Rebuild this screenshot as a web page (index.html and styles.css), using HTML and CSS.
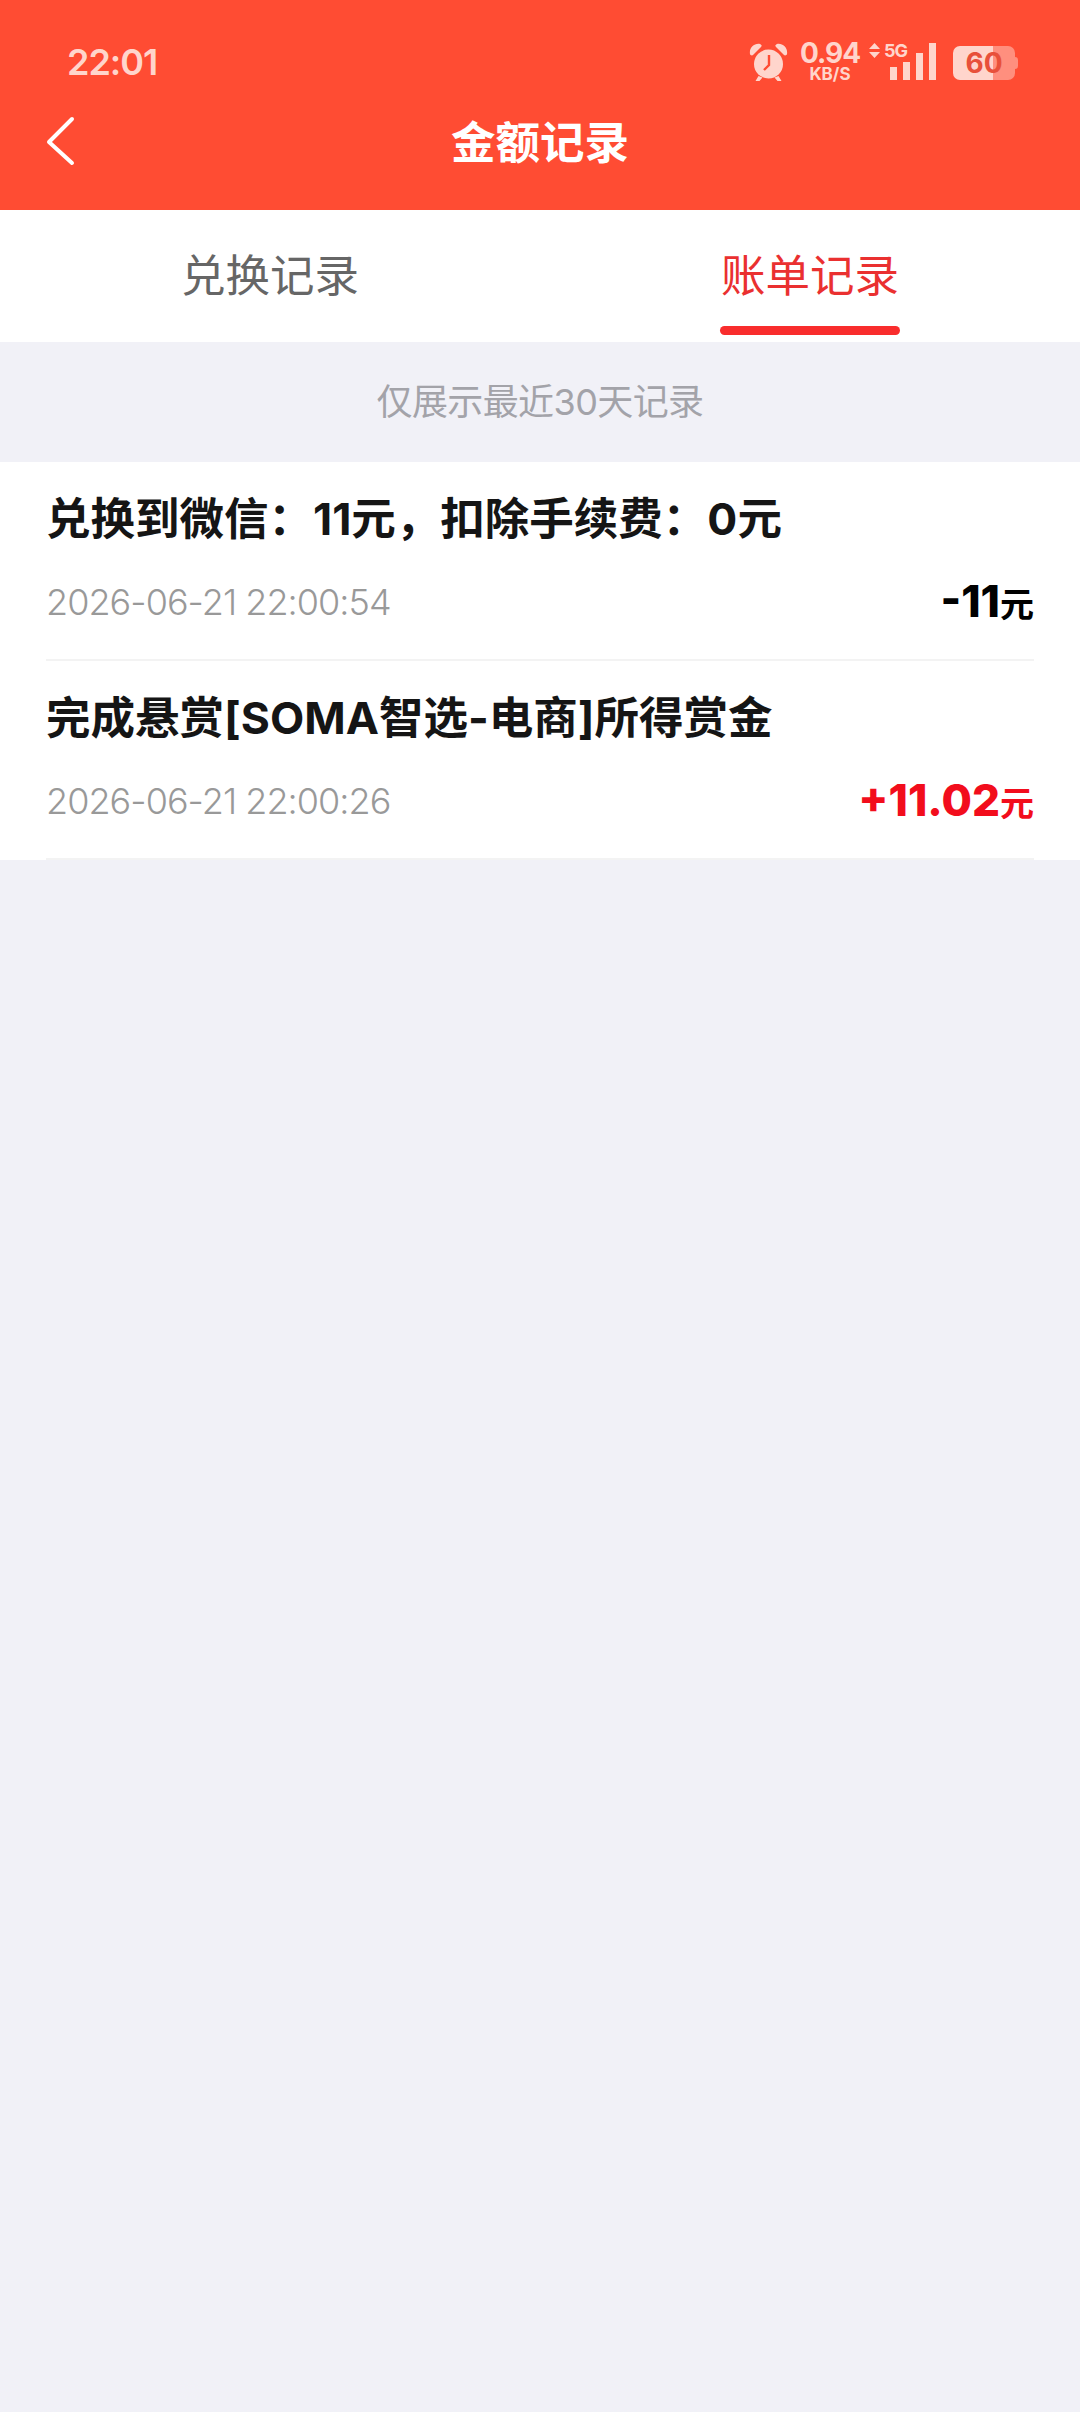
FILE: index.html
```html
<!DOCTYPE html>
<html>
<head>
    <title>金额记录</title>
    <link rel="stylesheet" href="styles.css">
</head>
<body>
<div class="header">
    <div class="status-bar">
        <span class="time">22:01</span>
        <div class="status-icons">
            <svg class="alarm" width="40" height="40" viewBox="0 0 40 40">
                <path d="M9.5 34l-3 5h4l3-3.500zM29.500 34l3 5h-4l-3-3.500z" fill="#ffd5cc"/>
                <circle cx="19.500" cy="22" r="14.500" fill="#ffd5cc"/>
                <path d="M20 13v10l-5 5" fill="none" stroke="#ff4c33" stroke-width="2.400"/>
                <path d="M1 12C0 6 5 1 11 2c2 1 2 2 1 3L4 13c-1 1-3 0-3-1zM38 12c1-6-4-11-10-10-2 1-2 2-1 3l8 8c1 1 3 0 3-1z" fill="#ffd5cc"/>
            </svg>
            <div class="speed">
                <span class="speed-num">0.94</span>
                <span class="speed-unit">KB/S</span>
            </div>
            <div class="net">
                <svg width="11" height="15" viewBox="0 0 11 15">
                    <path d="M5.500 0l5.500 6H0zM5.500 15L11 9H0z" fill="#ffd5cc"/>
                </svg>
                <span class="net-label">5G</span>
            </div>
            <div class="signal">
                <i class="bar-1"></i>
                <i class="bar-2"></i>
                <i class="bar-3"></i>
                <i class="bar-4"></i>
            </div>
            <div class="battery">
                <span class="battery-level">60</span>
                <i class="battery-cap"></i>
            </div>
        </div>
    </div>
    <div class="nav-bar">
        <svg class="back" width="30" height="50" viewBox="0 0 30 50">
            <path d="M26 3L3 26l23 21" fill="none" stroke="#fff" stroke-width="4" stroke-linecap="round" stroke-linejoin="round"/>
        </svg>
        <span class="nav-title">金额记录</span>
    </div>
</div>

<div class="tabs">
    <div class="tab">兑换记录</div>
    <div class="tab active">账单记录</div>
</div>

<div class="notice">仅展示最近30天记录</div>

<div class="list">
    <div class="item">
        <div class="item-title">兑换到微信：11元，扣除手续费：0元</div>
        <div class="item-info">
            <span class="item-date">2026-06-21 22:00:54</span>
            <span class="item-amount">-11<small>元</small></span>
        </div>
    </div>
    <div class="item">
        <div class="item-title">完成悬赏[SOMA智选-电商]所得赏金</div>
        <div class="item-info">
            <span class="item-date">2026-06-21 22:00:26</span>
            <span class="item-amount income">+11.02<small>元</small></span>
        </div>
    </div>
</div>
</body>
</html>
```

FILE: styles.css
```css
* {
    margin: 0;
    box-sizing: border-box;
}

body {
    min-height: 2412px;
    background: #f1f1f7;
    font-family: Inter, "Noto Sans CJK SC", sans-serif;
}

.header {
    height: 210px;
    background: #ff4c33;
}

.status-bar {
    height: 86px;
    padding: 36px 65px 0 67px;
    display: flex;
    justify-content: space-between;
    align-items: flex-start;
    color: #ffd5cc;
}

.time {
    margin-top: 4px;
    font-size: 36px;
    line-height: 44px;
    font-weight: 600;
    letter-spacing: -1px;
}

.status-icons {
    display: flex;
    align-items: flex-start;
    height: 46px;
}

.alarm {
    margin-top: 6px;
}

.speed {
    width: 60px;
    margin: 3px 0 0 11px;
    display: flex;
    flex-direction: column;
    align-items: center;
    font-weight: 700;
}

.speed-num {
    font-size: 28px;
    line-height: 28px;
    letter-spacing: -1px;
}

.speed-unit {
    font-size: 17px;
    line-height: 14px;
}

.net {
    width: 40px;
    margin-left: 9px;
    display: flex;
    align-items: flex-start;
    gap: 4px;
    padding-top: 7px;
}

.net-label {
    margin-top: -1px;
    font-size: 18px;
    line-height: 18px;
    font-weight: 700;
    letter-spacing: -1px;
}

.signal {
    margin: 7px 0 0 -19px;
    height: 37px;
    display: flex;
    align-items: flex-end;
    gap: 6px;
}

.signal i {
    display: block;
    width: 7px;
    background: #ffd5cc;
}

.bar-1 { height: 13px; }
.bar-2 { height: 18px; }
.bar-3 { height: 27px; }
.bar-4 { height: 37px; }

.battery {
    position: relative;
    width: 62px;
    height: 34px;
    margin: 10px 0 0 17px;
    border-radius: 7px;
    background: linear-gradient(90deg, #ffd5cc 0, #ffd5cc 40px, #ff8f7e 40px);
    color: #e8503a;
    font-size: 28px;
    font-weight: 700;
    line-height: 34px;
    text-align: center;
}

.battery-cap {
    position: absolute;
    right: -3px;
    top: 11px;
    width: 3px;
    height: 12px;
    border-radius: 0 3px 3px 0;
    background: #ff8f7e;
}

.nav-bar {
    position: relative;
    height: 124px;
    display: flex;
    align-items: center;
    justify-content: center;
    padding-bottom: 18px;
}

.back {
    position: absolute;
    left: 46px;
    top: 30px;
}

.nav-title {
    color: #fff;
    font-size: 44.5px;
    font-weight: 700;
}

.tabs {
    height: 132px;
    background: #fff;
    display: flex;
}

.tab {
    flex: 1;
    text-align: center;
    color: #666;
    font-size: 44.5px;
    line-height: 132px;
    position: relative;
}

.tab.active {
    color: #ea3030;
}

.tab.active::after {
    content: "";
    position: absolute;
    left: 180px;
    bottom: 7px;
    width: 180px;
    height: 9px;
    border-radius: 5px;
    background: #f92d2d;
}

.notice {
    height: 120px;
    text-align: center;
    color: #a3a3a9;
    font-size: 36px;
    line-height: 120px;
    letter-spacing: -0.6px;
}

.list {
    background: #fff;
    padding: 0 46px;
}

.item {
    height: 199px;
    border-bottom: 2px solid #f3f3f3;
}

.item-title {
    padding-top: 29px;
    color: #151515;
    font-size: 44.5px;
    line-height: 56px;
    font-weight: 700;
}

.item-info {
    display: flex;
    justify-content: space-between;
    align-items: center;
    margin-top: 27px;
    height: 56px;
}

.item-date {
    color: #999;
    font-size: 36px;
    font-weight: 300;
    letter-spacing: -0.95px;
}

.item-amount {
    margin-top: -2px;
    color: #000;
    font-size: 44px;
    font-weight: 800;
}

.item-amount small {
    font-size: 34px;
    font-weight: 700;
}

.item-amount.income {
    color: #f20d1c;
}
```
